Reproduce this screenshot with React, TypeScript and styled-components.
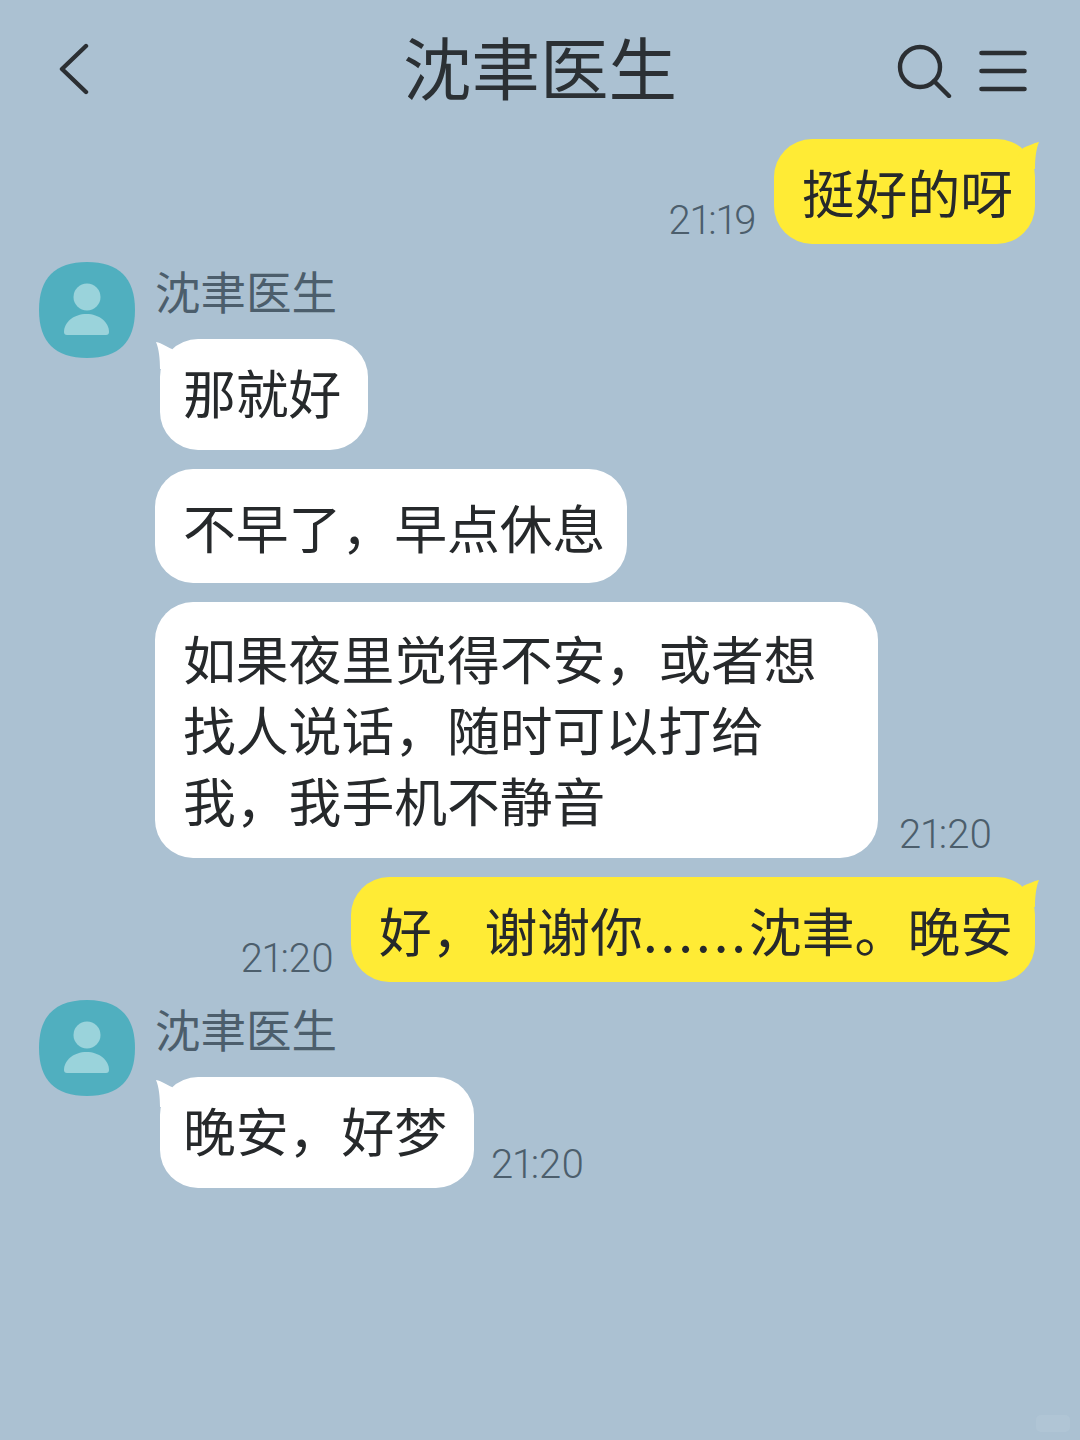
import { createGlobalStyle, styled } from "styled-components";

const GlobalStyle = createGlobalStyle`
  html, body {
    margin: 0;
    padding: 0;
    background: #abc1d2;
  }
  * {
    box-sizing: border-box;
  }
`;

const FONT = `"Noto Sans CJK SC", "Noto Sans", sans-serif`;

const Page = styled.div`
  position: relative;
  width: 1080px;
  height: 1440px;
  overflow: hidden;
  background: #abc1d2;
  font-family: ${FONT};
  color: #26292b;
`;

const Header = styled.header`
  display: grid;
  grid-template-columns: 1fr auto 1fr;
  align-items: center;
  height: 139px;
  padding: 0 52px;
`;

const Title = styled.h1`
  margin: 0;
  padding-bottom: 8px;
  font-size: 68.5px;
  font-weight: 400;
  line-height: 131px;
  color: #2b3034;
`;

const HeaderActions = styled.div`
  display: flex;
  justify-content: flex-end;
  align-items: center;
  gap: 25px;
`;

const IconButton = styled.span`
  display: flex;
  align-items: center;
  justify-content: center;
`;

const BackButton = styled(IconButton)`
  justify-self: start;
  margin-left: 5px;
`;

const Messages = styled.main`
  display: flex;
  flex-direction: column;
  gap: 18px;
`;

const OutgoingRow = styled.div`
  display: flex;
  justify-content: flex-end;
  align-items: flex-end;
  gap: 17px;
  padding-right: 45px;
`;

const IncomingGroup = styled.section`
  display: flex;
  gap: 20px;
  margin-bottom: 1px;
  padding-left: 39px;
`;

const Avatar = styled.svg`
  flex: none;
  width: 96px;
  height: 96px;
`;

const IncomingColumn = styled.div`
  display: flex;
  flex-direction: column;
  align-items: flex-start;
  gap: 19px;
`;

const SenderName = styled.div`
  height: 77px;
  margin-bottom: -19px;
  font-size: 45.5px;
  line-height: 56px;
  color: #4c5e6c;
`;

const BubbleRow = styled.div<{ $gap: number }>`
  display: flex;
  align-items: flex-end;
  gap: ${(p) => p.$gap}px;
`;

const Bubble = styled.div<{ $outgoing?: boolean; $tail?: boolean; $width?: number }>`
  position: relative;
  width: ${(p) => (p.$width ? `${p.$width}px` : "auto")};
  margin-left: ${(p) => (p.$tail ? "5px" : "0")};
  padding: ${(p) =>
    p.$outgoing
      ? "17px 22px 17px 28px"
      : p.$tail
        ? "17px 27px 23px 23px"
        : p.$width
          ? "20px 21px 23px 28px"
          : "22px 22px 21px 28px"};
  border-radius: 38px;
  background: ${(p) => (p.$outgoing ? "#ffeb35" : "#ffffff")};
  font-size: 52.8px;
  line-height: 71px;
  white-space: nowrap;
  color: #26292b;
`;

const Dots = styled.span`
  letter-spacing: 3px;
`;

const Tail = styled.svg<{ $side: "left" | "right" }>`
  position: absolute;
  top: 0;
  ${(p) => (p.$side === "left" ? "left: -5px;" : "right: -5px;")}
  width: 30px;
  height: 30px;
`;

const Time = styled.span`
  flex: none;
  font-family: Roboto, "Noto Sans", sans-serif;
  font-size: 40px;
  font-weight: 300;
  font-variant-numeric: proportional-nums;
  line-height: 47px;
  color: #4c5e6c;
`;

const Watermark = styled.div`
  position: absolute;
  right: 10px;
  bottom: 8px;
  width: 34px;
  height: 17px;
  border-radius: 5px;
  background: rgba(190, 208, 222, 0.3);
`;

function PersonAvatar() {
  return (
    <Avatar viewBox="0 0 96 96">
      <path
        d="M48 0C80 0 96 16 96 48C96 80 80 96 48 96C16 96 0 80 0 48C0 16 16 0 48 0Z"
        fill="#50afbf"
      />
      <circle cx="48" cy="35" r="13.5" fill="#9ad3db" />
      <path
        d="M25 70C25 60 35 52 47.5 52C60 52 70 60 70 70C70 72 69 73 67 73H28C26 73 25 72 25 70Z"
        fill="#9ad3db"
      />
    </Avatar>
  );
}

function OutgoingTail() {
  return (
    <Tail $side="right" viewBox="0 0 30 30">
      <path d="M29 3C24 4 18 7 13 9L0 30H25C25 20 26 10 29 3Z" fill="#ffeb35" />
    </Tail>
  );
}

function IncomingTail() {
  return (
    <Tail $side="left" viewBox="0 0 30 30">
      <path d="M1 3C7 4 12 8 17 10L30 30H5C5 20 4 10 1 3Z" fill="#ffffff" />
    </Tail>
  );
}

export default function App() {
  return (
    <Page>
      <GlobalStyle />
      <Header>
        <BackButton>
          <svg width="36" height="54" viewBox="0 0 36 54" fill="none">
            <path d="M29 3L5 26L29 49" stroke="#2b2f33" strokeWidth="4.4" strokeLinecap="round" strokeLinejoin="round" />
          </svg>
        </BackButton>
        <Title>沈聿医生</Title>
        <HeaderActions>
          <IconButton>
            <svg width="56" height="56" viewBox="0 0 56 56" fill="none" stroke="#2b2f33" strokeWidth="4.4" strokeLinecap="round">
              <circle cx="23" cy="25" r="20" />
              <path d="M37 39L52 54" />
            </svg>
          </IconButton>
          <IconButton>
            <svg width="50" height="46" viewBox="0 0 50 46" fill="none" stroke="#2b2f33" strokeWidth="4.6" strokeLinecap="round">
              <path d="M3.5 6H46.5" />
              <path d="M3.5 24H46.5" />
              <path d="M3.5 42H46.5" />
            </svg>
          </IconButton>
        </HeaderActions>
      </Header>

      <Messages>
        <OutgoingRow>
          <Time>21:19</Time>
          <Bubble $outgoing>
            挺好的呀
            <OutgoingTail />
          </Bubble>
        </OutgoingRow>

        <IncomingGroup>
          <PersonAvatar />
          <IncomingColumn>
            <SenderName>沈聿医生</SenderName>
            <Bubble $tail>
              那就好
              <IncomingTail />
            </Bubble>
            <Bubble>不早了，早点休息</Bubble>
            <BubbleRow $gap={21}>
              <Bubble $width={723}>
                如果夜里觉得不安，或者想
                <br />
                找人说话，随时可以打给
                <br />
                我，我手机不静音
              </Bubble>
              <Time>21:20</Time>
            </BubbleRow>
          </IncomingColumn>
        </IncomingGroup>

        <OutgoingRow>
          <Time>21:20</Time>
          <Bubble $outgoing>
            好，谢谢你<Dots>......</Dots>沈聿。晚安
            <OutgoingTail />
          </Bubble>
        </OutgoingRow>

        <IncomingGroup>
          <PersonAvatar />
          <IncomingColumn>
            <SenderName>沈聿医生</SenderName>
            <BubbleRow $gap={17}>
              <Bubble $tail>
                晚安，好梦
                <IncomingTail />
              </Bubble>
              <Time>21:20</Time>
            </BubbleRow>
          </IncomingColumn>
        </IncomingGroup>
      </Messages>
      <Watermark />
    </Page>
  );
}
